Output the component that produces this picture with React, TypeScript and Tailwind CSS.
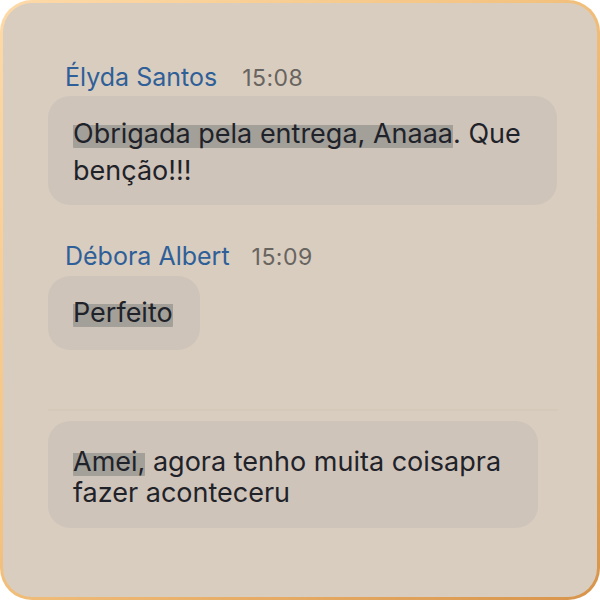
import React from "react";

const smear =
  "bg-[linear-gradient(to_bottom,transparent_24%,#a39f99_24%,#a39f99_94%,transparent_94%)] rounded-[4px]";

const App: React.FC = () => {
  return (
    <div className="w-[600px] h-[600px] bg-white" style={{ fontFamily: "Inter, 'Noto Sans', sans-serif" }}>
      <div className="w-full h-full rounded-[32px] p-[3px] bg-[linear-gradient(135deg,#fddaa9_0%,#f3c27f_45%,#d8944b_100%)]">
        <div className="w-full h-full rounded-[29px] bg-[#d9cdbf] pl-[45px] pr-[40px] pt-[59px]">
          {/* Élyda */}
          <div className="flex items-baseline gap-[25px] pl-[17px] h-[30px]">
            <span className="text-[25px] leading-[30px] text-[#2f5f98]">Élyda Santos</span>
            <span className="text-[23px] leading-[30px] text-[#68645f] tracking-[0.02em]">15:08</span>
          </div>
          <div className="mt-[4px] w-[509px] rounded-[22px] bg-[#cfc4ba] pl-[25px] pr-[20px] pt-[19px] pb-[16px] text-[27px] leading-[37px] text-[#1f2329]">
            <span className={smear}>Obrigada pela entrega, Anaaa</span>. Que
            <br />
            benção!!!
          </div>

          {/* Débora */}
          <div className="flex items-baseline gap-[22px] pl-[17px] h-[30px] mt-[36px]">
            <span className="text-[25px] leading-[30px] text-[#2f5f98]">Débora Albert</span>
            <span className="text-[23px] leading-[30px] text-[#68645f] tracking-[0.02em]">15:09</span>
          </div>
          <div className="mt-[5px] w-fit rounded-[22px] bg-[#cfc4ba] pl-[25px] pr-[27px] pt-[18px] pb-[19px] text-[27px] leading-[37px] text-[#1f2329]">
            <span className={smear}>Perfeito</span>
          </div>

          {/* faint artifact line */}
          <div className="mt-[59px] h-[2px] w-[510px] bg-[#d2c6b8]/60" />

          <div className="mt-[10px] w-[490px] rounded-[22px] bg-[#cfc4ba] pl-[25px] pr-[20px] pt-[25px] pb-[20px] text-[27px] leading-[31px] text-[#1f2329]">
            <span className={smear}>Amei,</span> agora tenho muita coisapra
            <br />
            fazer aconteceru
          </div>
        </div>
      </div>
    </div>
  );
};

export default App;
